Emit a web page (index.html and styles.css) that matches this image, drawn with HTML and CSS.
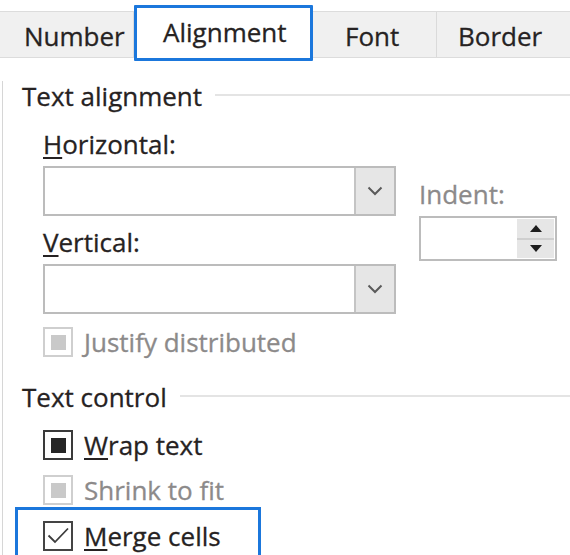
FILE: index.html
```html
<!DOCTYPE html>
<html>
<head>
<meta charset="utf-8">
<link rel="stylesheet" href="styles.css">
</head>
<body>
<div class="dialog">
  <div class="tabs">
    <div class="tab tab-number">Number</div>
    <div class="tab tab-active">Alignment</div>
    <div class="tab tab-font">Font</div>
    <div class="tab tab-border">Border</div>
  </div>
  <div class="panel">
    <div class="group-head group-head-first">
      <span class="group-title">Text alignment</span>
      <span class="group-line"></span>
    </div>
    <div class="align-row">
      <div class="left-col">
        <div class="label label-h"><u>H</u>orizontal:</div>
        <div class="combo">
          <div class="combo-field"></div>
          <div class="combo-btn">
            <svg width="16" height="10" viewBox="0 0 16 10"><path d="M1.5 1.5 L8 8 L14.5 1.5" fill="none" stroke="#5a5a5a" stroke-width="2"/></svg>
          </div>
        </div>
        <div class="label label-v"><u>V</u>ertical:</div>
        <div class="combo">
          <div class="combo-field"></div>
          <div class="combo-btn">
            <svg width="16" height="10" viewBox="0 0 16 10"><path d="M1.5 1.5 L8 8 L14.5 1.5" fill="none" stroke="#5a5a5a" stroke-width="2"/></svg>
          </div>
        </div>
      </div>
      <div class="right-col">
        <div class="label disabled">Indent:</div>
        <div class="spinner">
          <div class="spin-field"></div>
          <div class="spin-btns">
            <div class="spin-btn spin-up"><svg width="12" height="7" viewBox="0 0 12 7"><path d="M6 0 L12 7 L0 7 Z" fill="#1e1e1e"/></svg></div>
            <div class="spin-btn"><svg width="12" height="7" viewBox="0 0 12 7"><path d="M0 0 L12 0 L6 7 Z" fill="#1e1e1e"/></svg></div>
          </div>
        </div>
      </div>
    </div>
    <div class="check-row row-justify">
      <span class="checkbox cb-disabled"><span class="cb-fill"></span></span>
      <span class="check-label disabled">Justify distributed</span>
    </div>
    <div class="group-head group-head-second">
      <span class="group-title">Text control</span>
      <span class="group-line"></span>
    </div>
    <div class="check-row row-wrap">
      <span class="checkbox cb-mixed"><span class="cb-fill"></span></span>
      <span class="check-label"><u>W</u>rap text</span>
    </div>
    <div class="check-row row-shrink">
      <span class="checkbox cb-disabled"><span class="cb-fill"></span></span>
      <span class="check-label disabled">Shrink to fit</span>
    </div>
    <div class="focus-box">
      <div class="check-row">
        <span class="checkbox cb-checked">
          <svg width="26" height="26" viewBox="0 0 26 26"><path d="M3.5 12.5 L10 19 L23 5.5" fill="none" stroke="#3c3c3c" stroke-width="1.8"/></svg>
        </span>
        <span class="check-label"><u>M</u>erge cells</span>
      </div>
    </div>
  </div>
</div>
</body>
</html>
```

FILE: styles.css
```css
* { box-sizing: border-box; }

html, body {
  margin: 0;
  padding: 0;
  background: #ffffff;
}

body {
  width: 570px;
  height: 555px;
  overflow: hidden;
  font-family: "Open Sans", "Noto Sans", sans-serif;
  font-size: 26px;
  color: #262222;
  -webkit-text-stroke: 0.3px currentColor;
}

.dialog {
  width: 570px;
}

/* Tabs */
.tabs {
  display: flex;
  margin-top: 11px;
  height: 47px;
  background: #f0f0f0;
  border-top: 1px solid #dcdcdc;
  border-bottom: 1px solid #dcdcdc;
}

.tab {
  display: flex;
  align-items: center;
  height: 100%;
  line-height: 1;
  border-right: 1px solid #dadada;
  padding-top: 2px;
}

.tab-number {
  width: 134px;
  padding-left: 24px;
}

.tab-active {
  width: 179px;
  height: 56px;
  margin-top: -7px;
  padding-left: 26px;
  padding-top: 0;
  padding-bottom: 3px;
  background: #ffffff;
  border: 3px solid #1b77dc;
  border-radius: 1px;
  position: relative;
  z-index: 1;
}

.tab-font {
  width: 124px;
  padding-left: 32px;
}

.tab-border {
  flex: 1;
  padding-left: 21px;
  border-right: none;
}

/* Panel */
.panel {
  margin-left: 2px;
  border-left: 1px solid #d6d6d6;
  padding-left: 19px;
  height: 500px;
}

.group-head {
  display: flex;
  align-items: center;
  height: 30px;
}

.group-head-first {
  margin-top: 23px;
}

.group-head-second {
  margin-top: 25px;
}

.group-title {
  white-space: nowrap;
}

.group-line {
  flex: 1;
  height: 2px;
  background: #e4e4e4;
  margin-left: 13px;
  margin-top: -3px;
}

.align-row {
  display: flex;
  padding-left: 21px;
  margin-top: 18px;
}

.left-col {
  width: 353px;
  display: flex;
  flex-direction: column;
}

.label {
  height: 30px;
  line-height: 30px;
  white-space: nowrap;
}

.label u, .check-label u {
  text-decoration-thickness: 2px;
  text-underline-offset: 3px;
}

.label-v {
  margin-top: 11px;
}

.combo {
  display: flex;
  margin-top: 7px;
  height: 50px;
  border: 2px solid #bcbcbc;
  background: #ffffff;
}

.combo-field {
  flex: 1;
}

.combo-btn {
  width: 40px;
  background: #e6e6e6;
  border-left: 2px solid #c4c4c4;
  display: flex;
  align-items: center;
  justify-content: center;
}

.right-col {
  margin-left: 23px;
  padding-top: 50px;
  width: 138px;
}

.spinner {
  margin-top: 7px;
  height: 45px;
  border: 2px solid #bcbcbc;
  display: flex;
}

.spin-field {
  flex: 1;
}

.spin-btns {
  width: 37px;
  margin: 1px;
  display: flex;
  flex-direction: column;
  background: #e6e6e6;
}

.spin-btn {
  flex: 1;
  display: flex;
  align-items: center;
  justify-content: center;
}

.spin-up {
  border-bottom: 2px solid #cfcfcf;
}

.disabled {
  color: #8c8a8a;
}

/* Checkboxes */
.check-row {
  display: flex;
  align-items: center;
  height: 30px;
  padding-left: 21px;
}

.row-justify {
  margin-top: 13px;
}

.row-wrap {
  margin-top: 18px;
}

.row-shrink {
  margin-top: 15px;
}

.checkbox {
  width: 30px;
  height: 30px;
  border: 2px solid #3a3a3a;
  display: flex;
  align-items: center;
  justify-content: center;
  flex-shrink: 0;
  background: #ffffff;
}

.cb-fill {
  width: 15px;
  height: 15px;
}

.cb-mixed .cb-fill {
  background: #262626;
}

.cb-disabled {
  border-color: #cfcfcf;
}

.cb-disabled .cb-fill {
  background: #c9c9c9;
}

.cb-checked {
  border-color: #444444;
}

.check-label {
  margin-left: 11px;
  white-space: nowrap;
  line-height: 30px;
}

.focus-box {
  margin-top: 2px;
  margin-left: -7px;
  width: 246px;
  height: 60px;
  border: 3px solid #1b77dc;
  padding-top: 11px;
  padding-left: 25px;
}

.focus-box .check-row {
  padding-left: 0;
}
```
